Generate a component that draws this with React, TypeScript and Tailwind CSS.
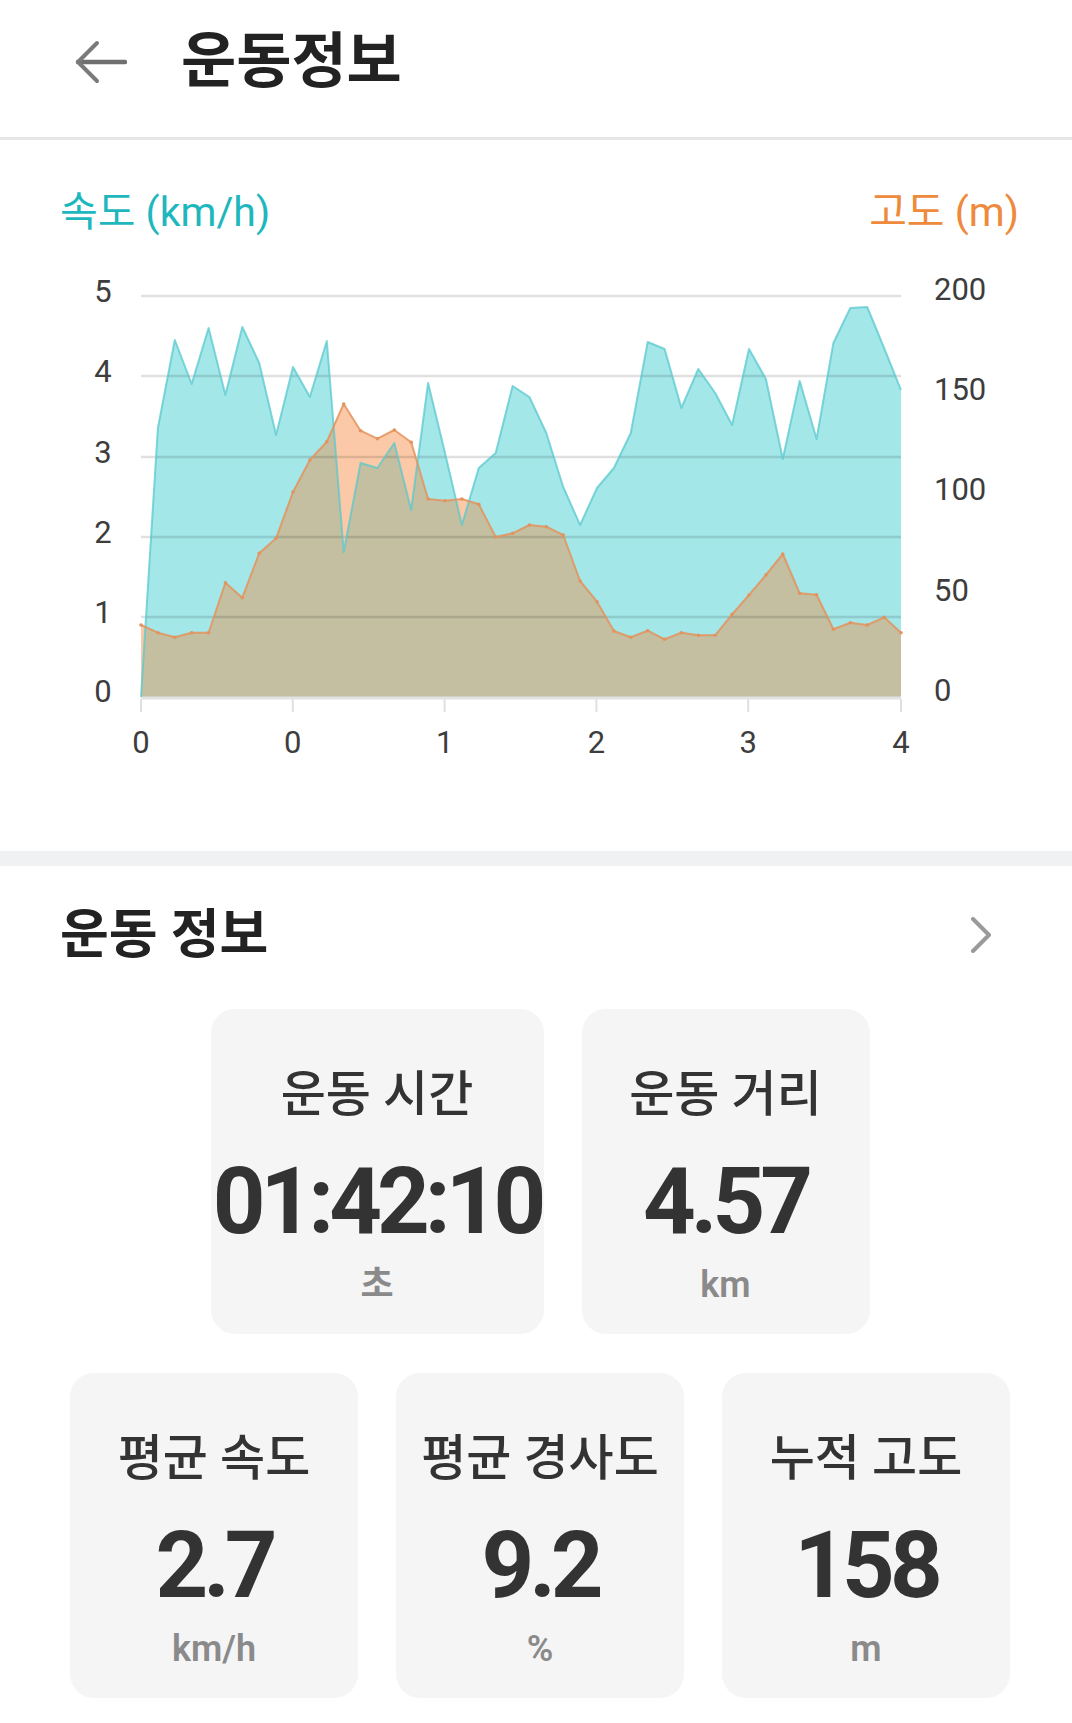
import React from "react";

// chart geometry, in page pixels
const X0 = 141;
const X1 = 901;
const BASE = 697;
const STEP = (X1 - X0) / 45;

const speed = [
  697, 428, 340, 384, 328, 395, 327, 363, 435, 367, 397, 341, 552, 463, 468, 443,
  510, 383, 453, 525, 468, 453, 386, 397, 433, 487, 525, 488, 468, 433, 342, 349,
  408, 369, 393, 425, 349, 379, 459, 381, 439, 343, 308, 307, 348, 390,
];

const altitude = [
  625, 632.7, 637.3, 632.7, 632.7, 582.7, 597.7, 553.3, 538.3, 492, 460, 441.7, 404,
  430.7, 438.7, 430, 442.3, 499, 500.7, 499, 504.3, 537, 533.3, 525, 526.7, 535, 581,
  601.7, 631, 637.3, 630.7, 639.3, 632.7, 635.3, 635.3, 614.3, 595, 575, 554, 593.3,
  594.7, 629.3, 622.7, 625, 617.3, 632.7,
];

const toPoints = (ys: number[]) =>
  ys.map((y, i) => `${(X0 + i * STEP).toFixed(1)},${y}`).join(" ");

const area = (p: string) => `${X0},${BASE} ${p} ${X1},${BASE}`;

const grid = [296, 376, 457, 537, 617];
const leftLabels = ["5", "4", "3", "2", "1", "0"];
const leftY = [291, 371, 452, 532, 612, 691];
const rightLabels = ["200", "150", "100", "50", "0"];
const rightY = [289, 389, 489, 590, 690];
const xTicks = [
  { x: 141, t: "0" },
  { x: 292.8, t: "0" },
  { x: 444.6, t: "1" },
  { x: 596.4, t: "2" },
  { x: 748.2, t: "3" },
  { x: 901, t: "4" },
];

const Chart = () => {
  const sp = toPoints(speed);
  const al = toPoints(altitude);

  return (
    <svg width="1072" height="616" viewBox="0 235 1072 616" className="block">
      <defs>
        <clipPath id="speedArea">
          <polygon points={area(sp)} />
        </clipPath>
      </defs>

      {/* fills */}
      <polygon points={area(sp)} fill="#a3e7e9" />
      <polygon points={area(al)} fill="#fbc9a7" />
      <polygon points={area(al)} fill="#c3bfa0" clipPath="url(#speedArea)" />

      {/* grid */}
      {grid.map((y) => (
        <line key={y} x1={X0} x2={X1} y1={y} y2={y} stroke="rgba(0,0,0,0.12)" strokeWidth="2.5" />
      ))}
      <line x1={X0} x2={X1} y1={BASE + 1} y2={BASE + 1} stroke="#e2e2e2" strokeWidth="3" />
      {xTicks.map((t, i) => (
        <line key={i} x1={t.x} x2={t.x} y1={BASE + 2} y2={BASE + 15} stroke="#e0e0e0" strokeWidth="2" />
      ))}

      {/* lines */}
      <polyline points={sp} fill="none" stroke="#58c8ce" strokeOpacity="0.75" strokeWidth="2" strokeLinejoin="round" />
      <polyline points={al} fill="none" stroke="#e3935d" strokeOpacity="0.85" strokeWidth="2" strokeLinejoin="round" />
      {altitude.map((y, i) => (
        <circle key={i} cx={X0 + i * STEP} cy={y} r="1.8" fill="#e3935d" />
      ))}

      {/* axis labels */}
      <g fill="#3d3d3d" fontSize="31" fontFamily="Roboto, sans-serif">
        {leftLabels.map((t, i) => (
          <text key={t} x="103" y={leftY[i]} textAnchor="middle" dominantBaseline="central">
            {t}
          </text>
        ))}
        {rightLabels.map((t, i) => (
          <text key={t} x="934" y={rightY[i]} dominantBaseline="central">
            {t}
          </text>
        ))}
        {xTicks.map((t, i) => (
          <text key={i} x={t.x} y="742" textAnchor="middle" dominantBaseline="central">
            {t.t}
          </text>
        ))}
      </g>
    </svg>
  );
};

type StatProps = {
  label: string;
  value: string;
  unit: string;
  width: string;
};

const Stat = ({ label, value, unit, width }: StatProps) => (
  <div className={`${width} h-[325px] rounded-[24px] bg-[#f5f5f5] flex flex-col items-center pt-[58px]`}>
    <div className="text-[49px] leading-[56px] font-medium text-[#333] whitespace-nowrap">{label}</div>
    <div className="mt-[29px] text-[92px] leading-[100px] font-bold tracking-[-5px] text-[#333] whitespace-nowrap">
      {value}
    </div>
    <div className="mt-[13px] text-[36px] leading-[40px] font-semibold text-[#8a8a8a]">{unit}</div>
  </div>
);

const App = () => {
  return (
    <div className="w-[1072px] min-h-[1723px] bg-white font-[Roboto,'Noto_Sans_CJK_KR',sans-serif]">
      {/* HEADER */}
      <div className="h-[140px] pb-[14px] flex items-center pl-[75px] gap-[54px] border-b-[3px] border-[#e6e6e6]">
        <svg width="52" height="44" viewBox="0 0 52 44">
          <path d="M3 22 H50" stroke="#707070" strokeWidth="4.5" strokeLinecap="round" />
          <path d="M22 3 L3 22 L22 41" stroke="#7a7a7a" strokeWidth="4" fill="none" strokeLinecap="round" strokeLinejoin="round" />
        </svg>
        <h1 className="text-[60px] leading-none font-bold text-[#222]">운동정보</h1>
      </div>

      {/* CHART */}
      <div className="pt-[50px]">
        <div className="flex justify-between pl-[60px] pr-[53px] text-[41px] leading-[45px]">
          <span className="text-[#1fb7be]">속도 (km/h)</span>
          <span className="text-[#ee8a3c]">고도 (m)</span>
        </div>
        <Chart />
      </div>

      <div className="h-[15px] bg-[#f0f1f3]" />

      {/* STATS */}
      <div className="pt-[38px] flex items-center justify-between pl-[60px] pr-[80px]">
        <h2 className="text-[53px] leading-[62px] font-bold text-[#222]">운동 정보</h2>
        <svg width="22" height="36" viewBox="0 0 22 36">
          <path d="M3 2 L19 18 L3 34" stroke="#9a9a9a" strokeWidth="4" fill="none" strokeLinecap="round" strokeLinejoin="round" />
        </svg>
      </div>

      <div className="mt-[43px] flex justify-center gap-[38px] pl-2">
        <Stat label="운동 시간" value="01:42:10" unit="초" width="w-[333px]" />
        <Stat label="운동 거리" value="4.57" unit="km" width="w-[288px]" />
      </div>

      <div className="mt-[39px] flex justify-center gap-[38px] pl-2">
        <Stat label="평균 속도" value="2.7" unit="km/h" width="w-[288px]" />
        <Stat label="평균 경사도" value="9.2" unit="%" width="w-[288px]" />
        <Stat label="누적 고도" value="158" unit="m" width="w-[288px]" />
      </div>
    </div>
  );
};

export default App;
